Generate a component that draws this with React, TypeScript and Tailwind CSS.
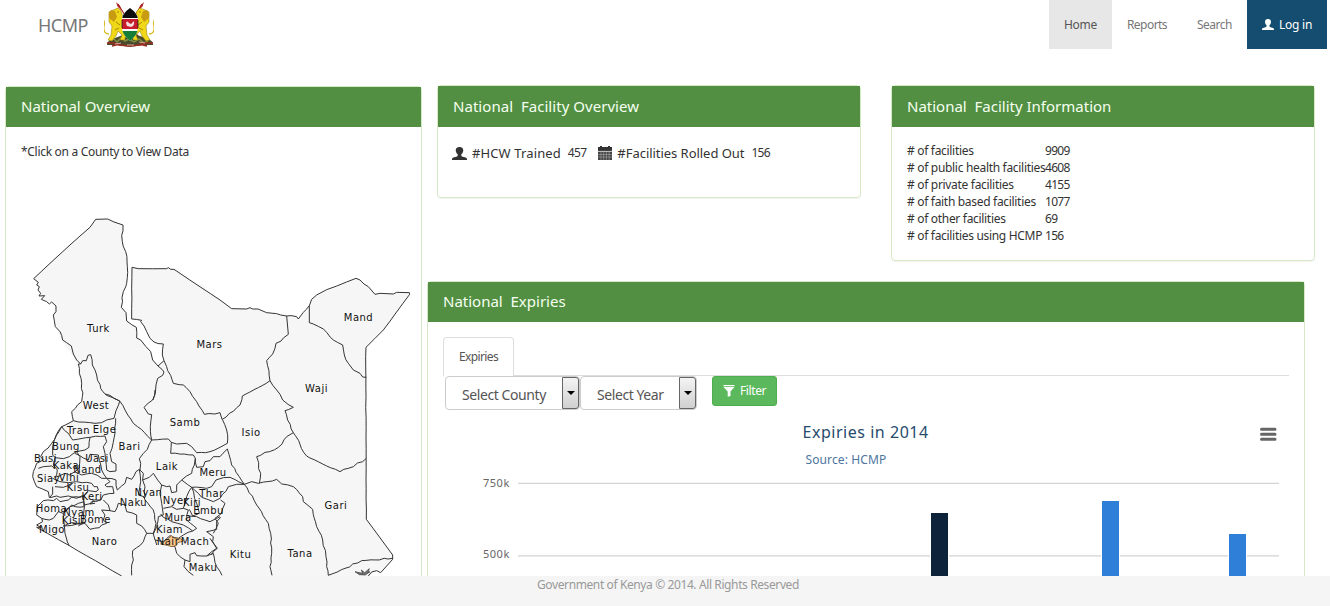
type Pt = [number, number];

/* Adds small deterministic bends to a poly-line so that borders look surveyed. */
function border(points: string, amp = 2.6, step = 13): string {
  const pts = points.split(" ").map((p) => p.split(",").map(Number) as Pt);
  let seed = Math.round(Math.abs(pts[0][0] * 7 + pts[0][1] * 13)) % 997;
  const rnd = () => {
    seed = (seed * 73 + 41) % 997;
    return seed / 997 - 0.5;
  };
  let d = `M${pts[0][0]} ${pts[0][1]}`;
  for (let i = 1; i < pts.length; i++) {
    const [ax, ay] = pts[i - 1];
    const [bx, by] = pts[i];
    const n = Math.floor(Math.hypot(bx - ax, by - ay) / step);
    for (let k = 1; k < n; k++) {
      const t = k / n;
      d += `L${(ax + (bx - ax) * t + rnd() * 2 * amp).toFixed(1)} ${(ay + (by - ay) * t + rnd() * 2 * amp).toFixed(1)}`;
    }
    d += `L${bx} ${by}`;
  }
  return d;
}

const LAND =
  "71,206 120,160 180,105 240,52 257,28 293,27 312,36 339,45 337,95 347,125 352,170 350,220 340,245 334,292 348,308 350,333 379,352 380,384 392,390 408,410 422,425 428,450 444,468 462,452 457,435 460,402 432,396 420,385 395,335 365,327 366,172 473,176 490,178 510,190 630,270 665,296 720,293 770,308 830,318 860,320 865,327 898,287 905,268 920,255 1038,205 1050,210 1095,252 1150,248 1200,249 1120,360 1068,412 1069,928 1148,1035 1148,1048 1112,1088 1100,1082 1075,1098 335,1098 178,1007 80,952 95,935 80,915 80,890 100,872 160,860 120,865 115,845 80,830 68,800 80,760 100,725 125,700 155,650 190,632 185,605 215,575 217,560 205,462 150,385 130,310 138,285 95,265 85,235";

/* Straight borders. */
const STRAIGHT = [
  "71,206 120,160 180,105 240,52 257,28 293,27 312,36 339,45",
  "365,327 366,172 385,176 470,176 475,173 482,178 492,178 510,190 630,270 665,296 710,297 720,293 728,297 744,297 770,308 800,311 812,315 830,318",
  "905,268 920,255 950,239 1038,205 1050,210 1062,222 1075,230 1095,253 1110,250 1150,252 1160,247 1198,248 1199,253 1120,360 1068,412 1067,440 1069,928 1148,1035 1148,1048 1112,1088 1100,1082 1085,1086 1075,1098",
  "80,952 178,1007 335,1098",
  "830,318 835,373",
  "898,287 898,338",
];

/* Borders of the northern half. */
const NORTH = [
  "339,45 337,95 347,125 352,170 350,220 340,245 334,292 348,308 350,333 379,352 380,384 392,390 408,410 422,425 428,450 444,468 456,478 462,486 458,496 443,505 438,525 436,550 429,570",
  "365,327 395,331 392,335 410,365 420,385 432,396 460,402 457,435 462,452 444,468",
  "71,206 85,217 80,225 88,230 84,240 92,250 87,258 104,257 94,268 110,275 118,282 125,276 138,288 138,305 130,315 136,350 150,365 158,390 184,408 190,432 200,450 212,462",
  "205,462 212,462 218,452 229,452 234,436 242,434 247,465 260,495 272,535 290,556 325,571",
  "325,571 329,573",
  "205,462 208,490 215,520 217,560 215,575 185,605 190,632",
  "462,452 470,470 490,520 520,525 540,545 560,575 583,613 630,608 636,628",
  "830,318 860,320 865,327 880,307 898,287 905,268",
  "835,373 798,400 788,432 770,452 780,512 697,558 690,585 637,628",
  "780,512 800,540 818,570 850,592 825,602 850,668 890,738 950,768 990,785 1030,770 1069,745",
  "898,338 940,357 970,390 998,405 1003,435 1015,460 1030,480 1050,490 1058,501 1069,502",
  "850,668 830,680 805,712 740,740 752,790 748,820",
];

/* Borders of the southern half, measured from y = 540. */
const SOUTH = [
  "155,110 190,92 205,96 255,100 275,98 290,90 312,85 318,62 329,33 345,60 370,100 425,150",
  "329,33 300,16 285,12",
  "435,0 428,30 402,52 415,72 425,74 421,110 425,150 475,147 484,157 500,162 530,160 545,170 560,188 600,185 630,172 652,160 650,120 637,88",
  "484,157 482,190 550,195 556,205 553,225 545,250 515,270 500,285 500,305 485,308 480,288 470,290 455,285 443,270 430,250 418,262 398,270 400,250 390,240 392,220 388,206 412,178 425,150",
  "556,205 560,232 580,230 585,215 600,212 610,200 630,200 652,177",
  "155,110 175,130 188,150 240,142 285,138 290,155 280,170 285,190 290,240 300,245 318,243 318,222 305,215 300,190 315,130 317,85",
  "240,142 237,172 225,180 200,185 178,200 160,206 135,203 128,195 128,170 133,150 155,110 125,160 100,185 92,200 100,210 80,220 68,260 80,290 115,305 118,323 128,312 128,290",
  "200,185 210,200 207,235 195,245 215,255 245,250 275,265 290,265 275,240 265,195 240,193 235,210 195,190",
  "135,203 130,225 142,240 140,255 135,262 165,250 178,255 195,245",
  "85,235 100,230 125,228 135,235",
  "128,265 150,275 175,278 200,275 245,280 252,290 262,290 265,300 258,305 235,302 222,318",
  "120,323 140,318 150,322 175,318 200,325 215,318 222,318",
  "135,290 160,292 185,280",
  "290,265 300,275 285,285 290,290 308,290 312,310 280,315 272,330 245,335 240,342 255,340",
  "290,265 318,270 322,300 345,280 350,262 365,268 378,245 388,238 392,275 388,300 385,315 402,320 405,330 430,360 438,400 430,430 410,430 395,408 380,400 380,375 350,365 345,345 325,340 315,365 300,362 295,345 280,330",
  "300,362 275,360 285,375 280,390 290,400 275,405 268,413 240,418 225,400 215,402 160,408",
  "82,350 100,332 130,332 140,325 150,335 175,330 185,322 212,322 218,318 222,350 195,350 185,345 160,370 145,365 130,385 118,390 105,388 95,385 80,375 82,350",
  "95,385 98,395 80,405 92,412 80,412",
  "160,370 163,405 165,430 178,467",
  "222,320 222,360 218,400 205,408",
  "160,370 180,350 205,340 222,335",
  "222,345 245,340 250,330 272,330",
  "160,408 185,398 200,400 218,400",
  "410,430 400,455 368,482 370,510 365,525 365,556",
  "398,270 405,290 405,320",
  "455,285 450,310 455,340 460,375 445,380 440,410 430,432 435,450 460,455 480,437 505,445 520,435 548,423 560,415 530,390 535,360 520,355 500,358 485,350 460,355",
  "515,270 545,292 560,340 568,370 548,378 538,358",
  "545,292 530,320 520,355",
  "545,292 575,322 610,335 630,325",
  "545,292 590,295 605,290 618,270 640,263 660,262 703,283",
  "630,325 655,290 680,283 703,283",
  "652,177 665,225 703,283 740,345 775,400 782,430 785,490 780,530 786,556",
  "703,283 725,275 745,280 800,268 815,282 850,290 878,320 880,335 908,358 920,410 938,450 948,500 955,556",
  "955,556 1005,535 1055,512 1148,505",
  "452,372 460,382 485,395 520,405 548,423",
  "535,378 560,380 600,395 620,385 630,380",
  "460,455 495,470 500,490 525,510 522,530 535,545 550,556",
  "525,510 540,515 540,493 555,488 560,497 590,498 605,485 620,475 608,455 610,440 590,425 620,418 620,395 632,382",
  "590,498 610,490 620,530 636,556",
  "440,465 436,450",
  "632,330 645,340 635,370 615,385 625,400 610,430",
  "600,445 622,475 604,495",
];

const LABELS: [string, number, number][] = [
  ["Turk", 98.5, 332], ["Mars", 209.500, 348], ["Mand", 358.5, 321], ["Waji", 316.5, 392],
  ["West", 96, 409], ["Samb", 185, 426], ["Isio", 251, 436], ["Tran", 78.5, 434],
  ["Elge", 104.5, 433], ["Bari", 129.5, 450], ["Bung", 66, 450], ["Busi", 45.500, 462],
  ["Uasi", 97, 462], ["Kaka", 66, 469], ["Nand", 87.5, 473], ["Laik", 167, 470],
  ["Meru", 213, 476], ["Siay", 48.5, 482], ["Vihi", 69, 481], ["Kisu", 78, 491],
  ["Keri", 92, 500], ["Nyan", 148.500, 496], ["Naku", 133.500, 506], ["Nyer", 175.500, 504],
  ["Kiri", 192, 506], ["Thar", 211.500, 497], ["Embu", 208.500, 514], ["Homa", 51.500, 512],
  ["Nyam", 79, 516], ["Kisi", 71.5, 524], ["Bome", 95.500, 523], ["Mura", 178, 521],
  ["Migo", 52, 533], ["Kiam", 169.500, 533], ["Nair", 168, 545], ["Mach", 195, 545],
  ["Naro", 104.500, 545], ["Maku", 203, 571], ["Kitu", 240.500, 558], ["Tana", 300, 557],
  ["Gari", 336, 509],
];

function CountyMap() {
  return (
    <svg width="400" height="411" viewBox="21 165 400 411" className="block shrink-0">
      <g transform="translate(10 210) scale(0.33333)" fill="none" stroke="#333" strokeWidth="3" strokeLinejoin="round">
        <polygon points={LAND} fill="#f6f6f6" stroke="none" />
        {STRAIGHT.map((p) => <path key={p} d={border(p, 0.6, 30)} />)}
        {NORTH.map((p) => <path key={p} d={border(p)} />)}
        <g transform="translate(0 540)">
          {SOUTH.map((p) => <path key={p} d={border(p, 2.2)} />)}
          <path d="M452 462L472 448L485 437L492 444L512 446L520 453L503 458L500 466L486 470L472 466Z" fill="#fcc788" stroke="#8a6a40" />
          <path d="M1035 545L1058 550L1054 540L1064 548L1078 536L1074 548L1080 545L1066 555L1048 554Z" fill="#777" strokeWidth="2" />
        </g>
      </g>
      <g fontFamily="'DejaVu Sans', sans-serif" fontSize="10" fill="#111" textAnchor="middle" letterSpacing="0.5">
        {LABELS.map(([t, x, y]) => <text key={t} x={x} y={y}>{t}</text>)}
      </g>
    </svg>
  );
}

function CoatOfArms() {
  const lion = (
    <g>
      <path d="M14 10l5-2 3 3 2 6 5 3 2-2 1 2-3 4-5-1 1 6 4 5-3 4 0 2-5 0 2-5-4-4-2 5-4 5-4-1 3-5 1-9-3-4 0-10Z" fill="#f0d818" stroke="#8b7210" strokeWidth=".5" />
      <path d="M12 10q-4 4-1 9l4 3 3-5-2-6Z" fill="#c79c12" />
      <path d="M10 34q-6 0-5-8q1-4-1-7" fill="none" stroke="#d9b91a" strokeWidth="1.4" />
      <path d="M18 12h2M17 22l4 3M16 30l4-2" stroke="#8f7108" strokeWidth=".8" />
    </g>
  );
  return (
    <svg width="50" height="47" viewBox="4 1 50 47" className="block">
      <path d="M18 4L39 38M42 4L21 38" stroke="#a31d1d" strokeWidth="1.1" />
      <path d="M16 2l4 4 1.500 4.500-4-4ZM44 2l-4 4-1.500 4.500 4-4Z" fill="#b32020" />
      <path d="M7 45q0-5 8-7l8-3h14l9 3q8 3 7 7l-10 0-13 2-13-2Z" fill="#4a4a2c" />
      <path d="M10 40l4-1 3 3 4-4 4 3 4-2 5 3 5-3 5 4 4-2" stroke="#7f9140" strokeWidth="1.5" fill="none" />
      <path d="M7 43l8 0 4 2 10 1 11-1 5-2h8M12 46l8-2m19 0l8 2" stroke="#9e2c20" strokeWidth="1.6" fill="none" />
      <path d="M15 44l6-1m6 2h7m5-3l6 1" stroke="#d7a69a" strokeWidth="1" />
      <g transform="translate(-1 0)">{lion}</g>
      <g transform="translate(59 0) scale(-1 1)">{lion}</g>
      <path d="M30 8q7 5 8 10v9q0 7-8 14q-8-7-8-14v-9q1-5 8-10Z" fill="#fff" />
      <path d="M30 8q7 5 7.700 10H22.300Q23 13 30 8Z" fill="#0d0d0d" />
      <path d="M22 19h16v10H22Z" fill="#c61c2c" />
      <path d="M22.500 31h15q-1.500 5-7.500 10-6-5-7.500-10Z" fill="#157d36" />
      <path d="M26 23q1-3 3 0l2 1 3-3q1 5-3 6l-4-1Z" fill="#f4dede" />
      <path d="M22 20v8M38 20v8" stroke="#222" strokeWidth=".8" />
    </svg>
  );
}

function UserIcon({ className }: { className: string }) {
  return (
    <svg viewBox="0 0 14 14" preserveAspectRatio="none" className={className} fill="currentColor">
      <path d="M7 0C4.500 0 3.500 1.500 3.500 3.600C3.500 5.400 4.200 6.900 5.300 7.900V9.100C5.300 9.700 5 10 4 10.400L1.200 11.400C.4 11.800 0 12.300 0 13V14H14V13C14 12.300 13.600 11.800 12.800 11.400L10 10.400C9 10 8.700 9.700 8.700 9.100V7.900C9.800 6.900 10.500 5.400 10.500 3.600C10.500 1.500 9.500 0 7 0Z" />
    </svg>
  );
}

function CalendarIcon() {
  return (
    <svg viewBox="0 0 14 14" className="h-[14px] w-[14px]" fill="#333">
      <path d="M0 1h2V0h2v1h6V0h2v1h2v4H0Z" />
      <path d="M0 5.500h14V14H0Z" fill="#444" />
      <path d="M0 8.500h14M0 11h14M3 5.500V14M5.700 5.500V14M8.400 5.500V14M11.100 5.500V14" stroke="#aaa" strokeWidth=".6" />
      <path d="M0 5.300h14" stroke="#ddd" strokeWidth=".5" />
    </svg>
  );
}

function Heading({ children, className }: { children: string; className: string }) {
  return (
    <div className={`flex shrink-0 items-center whitespace-pre bg-[#528f42] pb-[2px] pl-[15px] text-[15px] leading-5 text-[#f5fff0] ${className}`}>
      {children}
    </div>
  );
}

const FACTS: [string, string][] = [
  ["# of facilities", "9909"],
  ["# of public health facilities", "4608"],
  ["# of private facilities", "4155"],
  ["# of faith based facilities", "1077"],
  ["# of other facilities", "69"],
  ["# of facilities using HCMP", "156"],
];

function Select({ label, className }: { label: string; className: string }) {
  return (
    <div className={`flex h-[34px] rounded-[4px] border border-[#ccc] bg-white text-[14px] text-[#555] ${className}`}>
      <div className="flex-1 whitespace-nowrap pl-[16px] pt-[8px] leading-5 tracking-[-0.42px]">{label}</div>
      <div className="flex w-[17px] shrink-0 items-center justify-center rounded-r-[3px] border border-[#666] bg-linear-to-b from-[#f4f4f4] to-[#d0d0d0]">
        <svg width="8" height="4" viewBox="0 0 8 4"><path d="M0 0H8L4 4Z" fill="#000" /></svg>
      </div>
    </div>
  );
}

function Chart() {
  return (
    <svg width="847" height="166" viewBox="443 410 847 166" className="block shrink-0">
      <g stroke="#d4d4d4" strokeWidth="1.300">
        <path d="M518 483.300H1279M518 555.800H1279" />
      </g>
      <g stroke="#fff" strokeWidth="1">
        <rect x="930.500" y="512.500" width="18" height="70" fill="#0d233a" />
        <rect x="1101.500" y="500.500" width="18" height="80" fill="#2f7ed8" />
        <rect x="1228.500" y="533.500" width="18" height="50" fill="#2f7ed8" />
      </g>
      <g stroke="#666" strokeWidth="3" strokeLinecap="round">
        <path d="M1261.500 429.300h13.500M1261.500 434.300h13.500M1261.500 439.300h13.500" />
      </g>
      <g fontFamily="'Noto Sans', sans-serif">
        <text x="802.500" y="438" fontSize="16" letterSpacing="0.53" fill="#274b6d">Expiries in 2014</text>
        <text x="805.500" y="464" fontSize="12" letterSpacing="0.12" fill="#4d759e">Source: HCMP</text>
        <text x="483" y="487" fontSize="11" letterSpacing="0.5" fill="#666">750k</text>
        <text x="483" y="558" fontSize="11" letterSpacing="0.5" fill="#666">500k</text>
      </g>
    </svg>
  );
}

export default function App() {
  return (
    <div className="flex h-[606px] w-[1330px] flex-col overflow-hidden bg-white font-['Noto_Sans',sans-serif] text-[12px] text-[#333]">
      <header className="flex h-[49px] shrink-0 justify-between pl-[38px] pr-[3px]">
        <div className="flex items-center text-[#777]">
          <span className="mt-px w-[66px] text-[18px] tracking-[-0.5px]">HCMP</span>
          <CoatOfArms />
        </div>
        <nav className="flex text-[#777]">
          <a className="flex w-[63px] items-center justify-center bg-[#e7e7e7] tracking-[-0.3px] text-[#555]">Home</a>
          <a className="flex w-[70px] items-center justify-center tracking-[-0.53px]">Reports</a>
          <a className="flex w-[65px] items-center justify-center tracking-[-0.48px]">Search</a>
          <a className="flex w-[80px] items-center bg-[#144d6f] pl-[15px] tracking-[-0.25px] text-white">
            <UserIcon className="mr-[5px] h-[11px] w-3" />Log in
          </a>
        </nav>
      </header>
      <main className="flex min-h-0 flex-1 overflow-hidden pl-[5px] pt-[36px]">
        <section className="mt-[1px] flex w-[417px] shrink-0 flex-col self-start rounded-[4px] border border-[#d6e9c6] pb-5">
          <Heading className="h-[40px]">National Overview</Heading>
          <div className="flex flex-col pl-[15px]">
            <p className="h-[38px] pt-[15px] leading-5 tracking-[-0.3px]">*Click on a County to View Data</p>
            <CountyMap />
          </div>
        </section>
        <div className="flex flex-col pl-[5px]">
          <div className="flex shrink-0 items-start pl-[10px]">
            <section className="h-[113px] w-[424px] rounded-[4px] border border-[#d6e9c6] shadow-[0_1px_1px_rgba(0,0,0,.05)]">
              <Heading className="h-[41px] tracking-[0.04px]">National  Facility Overview</Heading>
              <div className="flex items-center pl-[14px] pt-[16px] text-[13px] leading-5">
                <UserIcon className="mr-[5px] h-[13px] w-[15px]" />
                <span className="tracking-[0.12px]">#HCW Trained</span>
                <span className="ml-[7px] text-[12px] tracking-[-0.7px]">457</span>
                <span className="ml-3 mr-[5px]"><CalendarIcon /></span>
                <span className="tracking-[-0.04px]">#Facilities Rolled Out</span>
                <span className="ml-[7px] text-[12px] tracking-[-0.7px]">156</span>
              </div>
            </section>
            <section className="ml-[30px] h-[176px] w-[424px] rounded-[4px] border border-[#d6e9c6] shadow-[0_1px_1px_rgba(0,0,0,.05)]">
              <Heading className="h-[41px]">National  Facility Information</Heading>
              <dl className="pl-[15px] pt-[15px]">
                {FACTS.map(([k, v]) => (
                  <div key={k} className="flex h-[17px] whitespace-nowrap leading-[17px]">
                    <dt className="w-[138px] tracking-[-0.31px]">{k}</dt>
                    <dd className="tracking-[-0.72px]">{v}</dd>
                  </div>
                ))}
              </dl>
            </section>
          </div>
          <section className="mt-[20px] h-[400px] w-[878px] shrink-0 rounded-[4px] border border-[#d6e9c6]">
            <Heading className="h-[40px]">National  Expiries</Heading>
            <div className="px-[15px] pt-[15px]">
              <div className="flex h-[39px] border-b border-[#ddd]">
                <div className="flex h-[39px] w-[71px] items-center justify-center rounded-t-[4px] border border-b-0 border-[#ddd] bg-white tracking-[-0.62px] text-[#555]">Expiries</div>
              </div>
              <div className="flex h-[34px] pl-[2px]">
                <Select label="Select County" className="w-[135px]" />
                <Select label="Select Year" className="w-[117px]" />
                <button className="ml-[15px] flex h-[30px] w-[65px] items-center rounded-[3px] border border-[#4cae4c] bg-[#5cb85c] pl-[10px] tracking-[-0.4px] text-white">
                  <svg width="12" height="12" viewBox="0 0 12 12" className="mr-[5px]" fill="#fff"><path d="M.5 0h11v1.200H.5ZM.5 2h11L7.500 6.500V11L4.700 11.800V6.500Z" /></svg>
                  Filter
                </button>
              </div>
              <Chart />
            </div>
          </section>
        </div>
      </main>
      <footer className="flex h-[30px] shrink-0 justify-center bg-[#f5f5f5] pl-[6px] leading-[18px] tracking-[-0.39px] text-[#999]">Government of Kenya © 2014. All Rights Reserved</footer>
    </div>
  );
}
